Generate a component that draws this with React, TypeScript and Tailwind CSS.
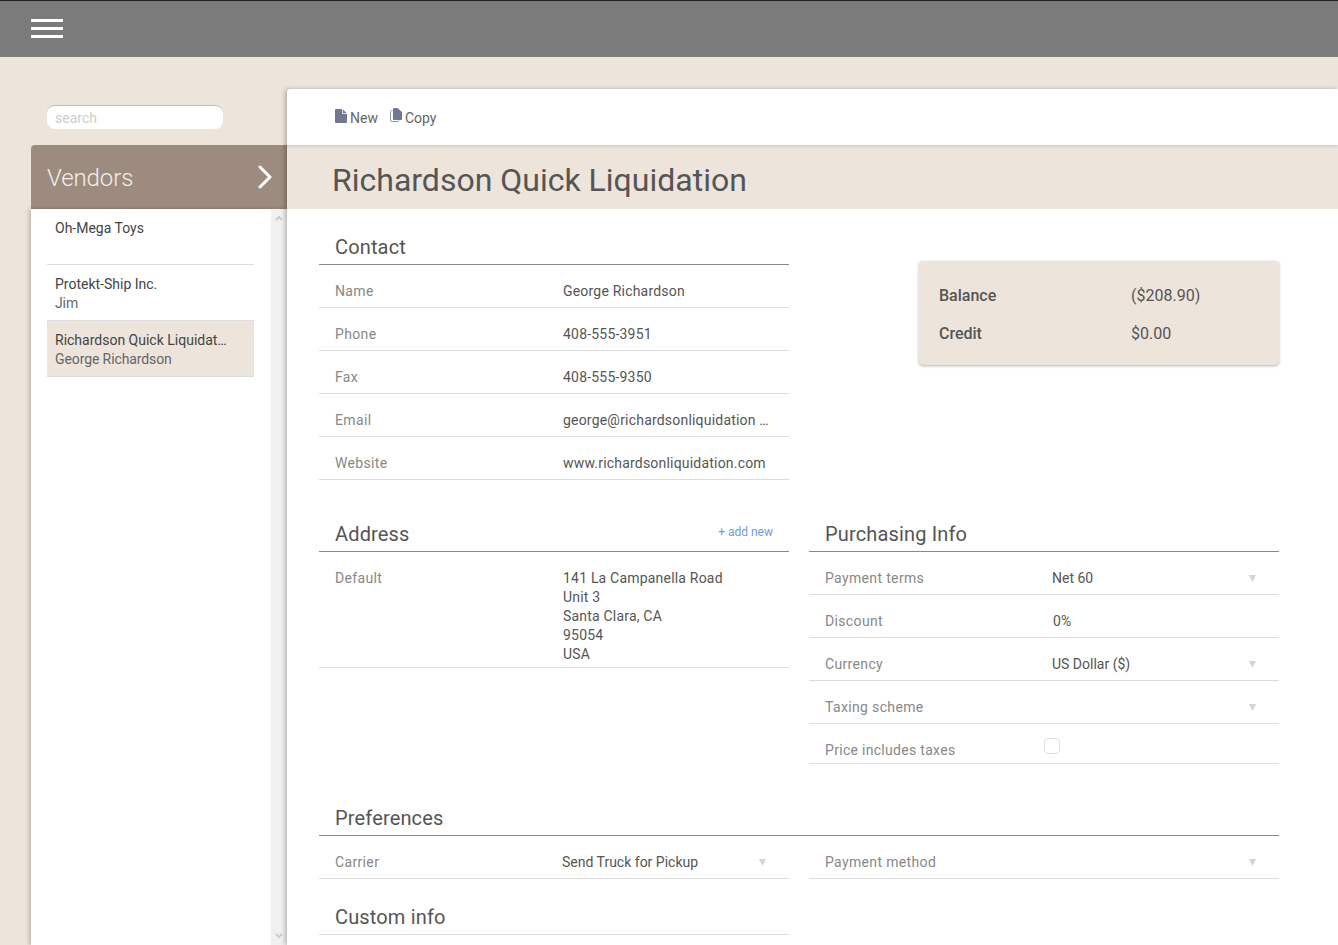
const font = "font-['Roboto',sans-serif]";

function Row({ label, value }: { label: string; value?: string }) {
  return (
    <div className="flex h-[43px] border-b border-[#ddd] pl-4 pt-[17px] text-sm leading-[19px]">
      <div className="w-[228px] shrink-0 tracking-[0.35px] text-[#888]">{label}</div>
      <div className="tracking-[0.2px] text-[#555]">{value}</div>
    </div>
  );
}

function SelectRow({ label, value }: { label: string; value?: string }) {
  return (
    <div className="flex h-[43px] items-start border-b border-[#ddd] pl-4 pr-[23px] pt-[17px] text-sm leading-[19px]">
      <div className="w-[227px] shrink-0 tracking-[0.35px] text-[#888]">{label}</div>
      <div className="flex-1 text-[#555]">{value}</div>
      <Arrow />
    </div>
  );
}

function Arrow() {
  return (
    <svg width="7" height="7" viewBox="0 0 7 7" className="mt-[6px] shrink-0">
      <path d="M0 0h7L3.5 7z" fill="#d4d4d4" />
    </svg>
  );
}

function SectionHead({ title, children }: { title: string; children?: React.ReactNode }) {
  return (
    <div className="flex h-14 items-end justify-between border-b border-[#888] pb-[5px] pl-4 pr-4">
      <h2 className="text-xl leading-6 font-normal tracking-[0.15px] text-[#555]">{title}</h2>
      {children}
    </div>
  );
}

function VendorItem({ name, contact, active }: { name: string; contact?: string; active?: boolean }) {
  return (
    <div className={`h-14 border-b border-[#ddd] pl-2 pt-[10px] text-sm leading-[19px] ${active ? "bg-[#ede4dc]" : ""}`}>
      <div className="text-[#444]">{name}</div>
      <div className="tracking-[-0.1px] text-[#666]">{contact}</div>
    </div>
  );
}

function Menu() {
  return (
    <div className="flex w-8 flex-col gap-[5px]">
      <div className="h-[3px] bg-white" />
      <div className="h-[3px] bg-white" />
      <div className="h-[3px] bg-white" />
    </div>
  );
}

export default function App() {
  return (
    <div className={`flex h-[945px] flex-col overflow-hidden bg-[#ede4dc] ${font}`}>
      <header className="flex h-[57px] shrink-0 items-center border-t border-[#222] bg-[#7b7b7b] pb-px pl-[31px]">
        <Menu />
      </header>

      <div className="flex min-h-0 flex-1">
        {/* side list */}
        <aside className="ml-[31px] flex w-[256px] shrink-0 flex-col">
          <div className="mt-12 mb-4 ml-4 w-[176px]">
            <input
              placeholder="search"
              className="block h-6 w-full rounded-lg border-t border-[#bbb] bg-white pl-2 text-sm text-[#555] outline-none placeholder:text-[#ccc]"
            />
          </div>
          <div className="flex h-16 shrink-0 items-center justify-between rounded-tl bg-[#9c8b7e] pl-4 pr-[14px]">
            <span className="mt-[2px] text-2xl font-light tracking-[-0.1px] text-[#f2eeea]">Vendors</span>
            <svg width="16" height="24" viewBox="0 0 16 24" fill="none" stroke="#fff" strokeWidth="3" strokeLinecap="round" strokeLinejoin="round">
              <path d="M3 2l10 10L3 22" />
            </svg>
          </div>
          <div className="flex min-h-0 flex-1 bg-white shadow-[-2px_0_4px_rgba(0,0,0,0.2)]">
            <div className="w-[240px] pl-4 pr-[17px]">
              <VendorItem name="Oh-Mega Toys" />
              <VendorItem name="Protekt-Ship Inc." contact="Jim" />
              <VendorItem name="Richardson Quick Liquidat…" contact="George Richardson" active />
            </div>
            <div className="flex w-4 flex-col items-center justify-between bg-[#f0f0f0] py-[6px]">
              <svg width="8" height="6" viewBox="0 0 8 6" fill="none" stroke="#c4c4c4" strokeWidth="1.6"><path d="M1 5l3-3 3 3" /></svg>
              <svg width="8" height="6" viewBox="0 0 8 6" fill="none" stroke="#c4c4c4" strokeWidth="1.6"><path d="M1 1l3 3 3-3" /></svg>
            </div>
          </div>
        </aside>

        {/* vendor detail */}
        <main className="relative mt-8 flex-1 overflow-hidden rounded-tl bg-white shadow-[-2px_0_4px_rgba(0,0,0,0.25)]">
          <div className="relative z-10 flex h-14 items-center gap-3 bg-white pl-12 pt-[2px] text-sm text-[#666] shadow-[0_1px_3px_rgba(0,0,0,0.15)]">
            <span className="flex items-center gap-[3px]">
              <svg width="12" height="14" viewBox="0 0 12 14" className="-mt-[4px]">
                <path d="M0 1a1 1 0 0 1 1-1h6.5L12 4.5V13a1 1 0 0 1-1 1H1a1 1 0 0 1-1-1z" fill="#727890" />
                <path d="M7.5 0v4.5H12" fill="none" stroke="#fff" strokeWidth="0.8" />
              </svg>
              New
            </span>
            <span className="flex items-center gap-[3px]">
              <svg width="12" height="14" viewBox="0 0 12 14" className="-mt-[6px]">
                <path d="M2.5 2.5H1.5a1 1 0 0 0-1 1V12a1.5 1.5 0 0 0 1.5 1.5h6a1 1 0 0 0 1-1" fill="none" stroke="#8f95ab" strokeWidth="1" />
                <path d="M3 1a1 1 0 0 1 1-1h3.5L12 4v7a1 1 0 0 1-1 1H4a1 1 0 0 1-1-1z" fill="#727890" />
              </svg>
              Copy
            </span>
          </div>
          <div className="flex h-16 items-center bg-[#ede4dc] pl-[45px] pt-[6px]">
            <h1 className="text-[32px] font-normal text-[#555]">Richardson Quick Liquidation</h1>
          </div>

          <div className="pl-8">
            <div className="grid w-[960px] grid-cols-2 gap-x-5">
              <section>
                <SectionHead title="Contact" />
                <Row label="Name" value="George Richardson" />
                <Row label="Phone" value="408-555-3951" />
                <Row label="Fax" value="408-555-9350" />
                <Row label="Email" value="george@richardsonliquidation …" />
                <Row label="Website" value="www.richardsonliquidation.com" />
              </section>
              <section>
                <div className="mt-[52px] ml-[110px] h-[104px] rounded bg-[#ede4dc] pl-5 pt-[25px] text-base leading-5 text-[#555] shadow-[0_1px_3px_rgba(0,0,0,0.3)]">
                  <div className="flex">
                    <div className="w-[192px] font-medium">Balance</div>
                    <div>($208.90)</div>
                  </div>
                  <div className="mt-[18px] flex">
                    <div className="w-[192px] font-medium">Credit</div>
                    <div>$0.00</div>
                  </div>
                </div>
              </section>

              <section className="mt-4">
                <SectionHead title="Address">
                  <a className="mb-[6px] text-xs text-[#6f9bd8]">+ add new</a>
                </SectionHead>
                <div className="flex border-b border-[#ddd] pl-4 pt-[17px] pb-[3px] text-sm leading-[19px]">
                  <div className="w-[228px] shrink-0 tracking-[0.35px] text-[#888]">Default</div>
                  <div className="tracking-[0.2px] text-[#555]">
                    <div>141 La Campanella Road</div>
                    <div>Unit 3</div>
                    <div>Santa Clara, CA</div>
                    <div>95054</div>
                    <div>USA</div>
                  </div>
                </div>
              </section>
              <section className="mt-4">
                <SectionHead title="Purchasing Info" />
                <SelectRow label="Payment terms" value="Net 60" />
                <Row label="Discount" value="0%" />
                <SelectRow label="Currency" value="US Dollar ($)" />
                <SelectRow label="Taxing scheme" />
                <div className="flex h-10 items-start border-b border-[#ddd] pl-4 pt-[17px] text-sm leading-[19px]">
                  <div className="w-[219px] shrink-0 tracking-[0.3px] text-[#888]">Price includes taxes</div>
                  <div className="-mt-[3px] h-4 w-4 rounded-sm border border-[#ddd] bg-white" />
                </div>
              </section>

              <section className="col-span-2 mt-4">
                <SectionHead title="Preferences" />
              </section>
              <SelectRow label="Carrier" value="Send Truck for Pickup" />
              <SelectRow label="Payment method" />

              <section>
                <div className="flex h-14 items-end border-b border-[#ddd] pb-[5px] pl-4">
                  <h2 className="text-xl leading-6 font-normal tracking-[0.15px] text-[#555]">Custom info</h2>
                </div>
              </section>
            </div>
          </div>
        </main>
      </div>
    </div>
  );
}
